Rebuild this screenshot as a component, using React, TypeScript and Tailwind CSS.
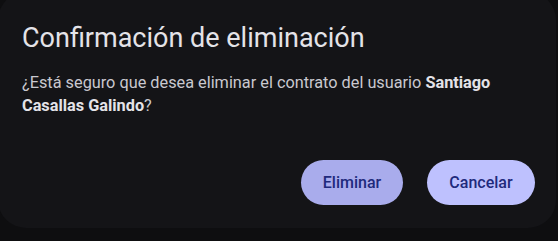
export default function App() {
  return (
    <div className="h-[241px] w-[558px] overflow-hidden bg-[#0e0e10] font-['Roboto',sans-serif]">
      <div className="-mt-[8px] -ml-[2px] flex h-[236px] w-[558px] flex-col rounded-[28px] bg-[#141417] pl-[24px] pr-[21px]">
        <h1 className="mt-[30px] text-[27px] leading-[32px] font-normal text-[#e4e3e8]">
          Confirmación de eliminación
        </h1>
        <p className="mt-[17px] w-[500px] text-[16.3px] leading-[23px] text-[#c9c8cf]">
          ¿Está seguro que desea eliminar el contrato del usuario{' '}
          <span className="font-bold text-[#e4e3e8]">Santiago Casallas Galindo</span>?
        </p>
        <div className="mt-auto mb-[23px] flex justify-end gap-[24px]">
          <button className="h-[45px] w-[102px] rounded-full bg-[#a9acec] text-[16px] font-medium text-[#1f2a7c]">
            Eliminar
          </button>
          <button className="h-[45px] w-[108px] rounded-full bg-[#bec1fe] text-[16px] font-medium text-[#1f2a7c]">
            Cancelar
          </button>
        </div>
      </div>
    </div>
  );
}
